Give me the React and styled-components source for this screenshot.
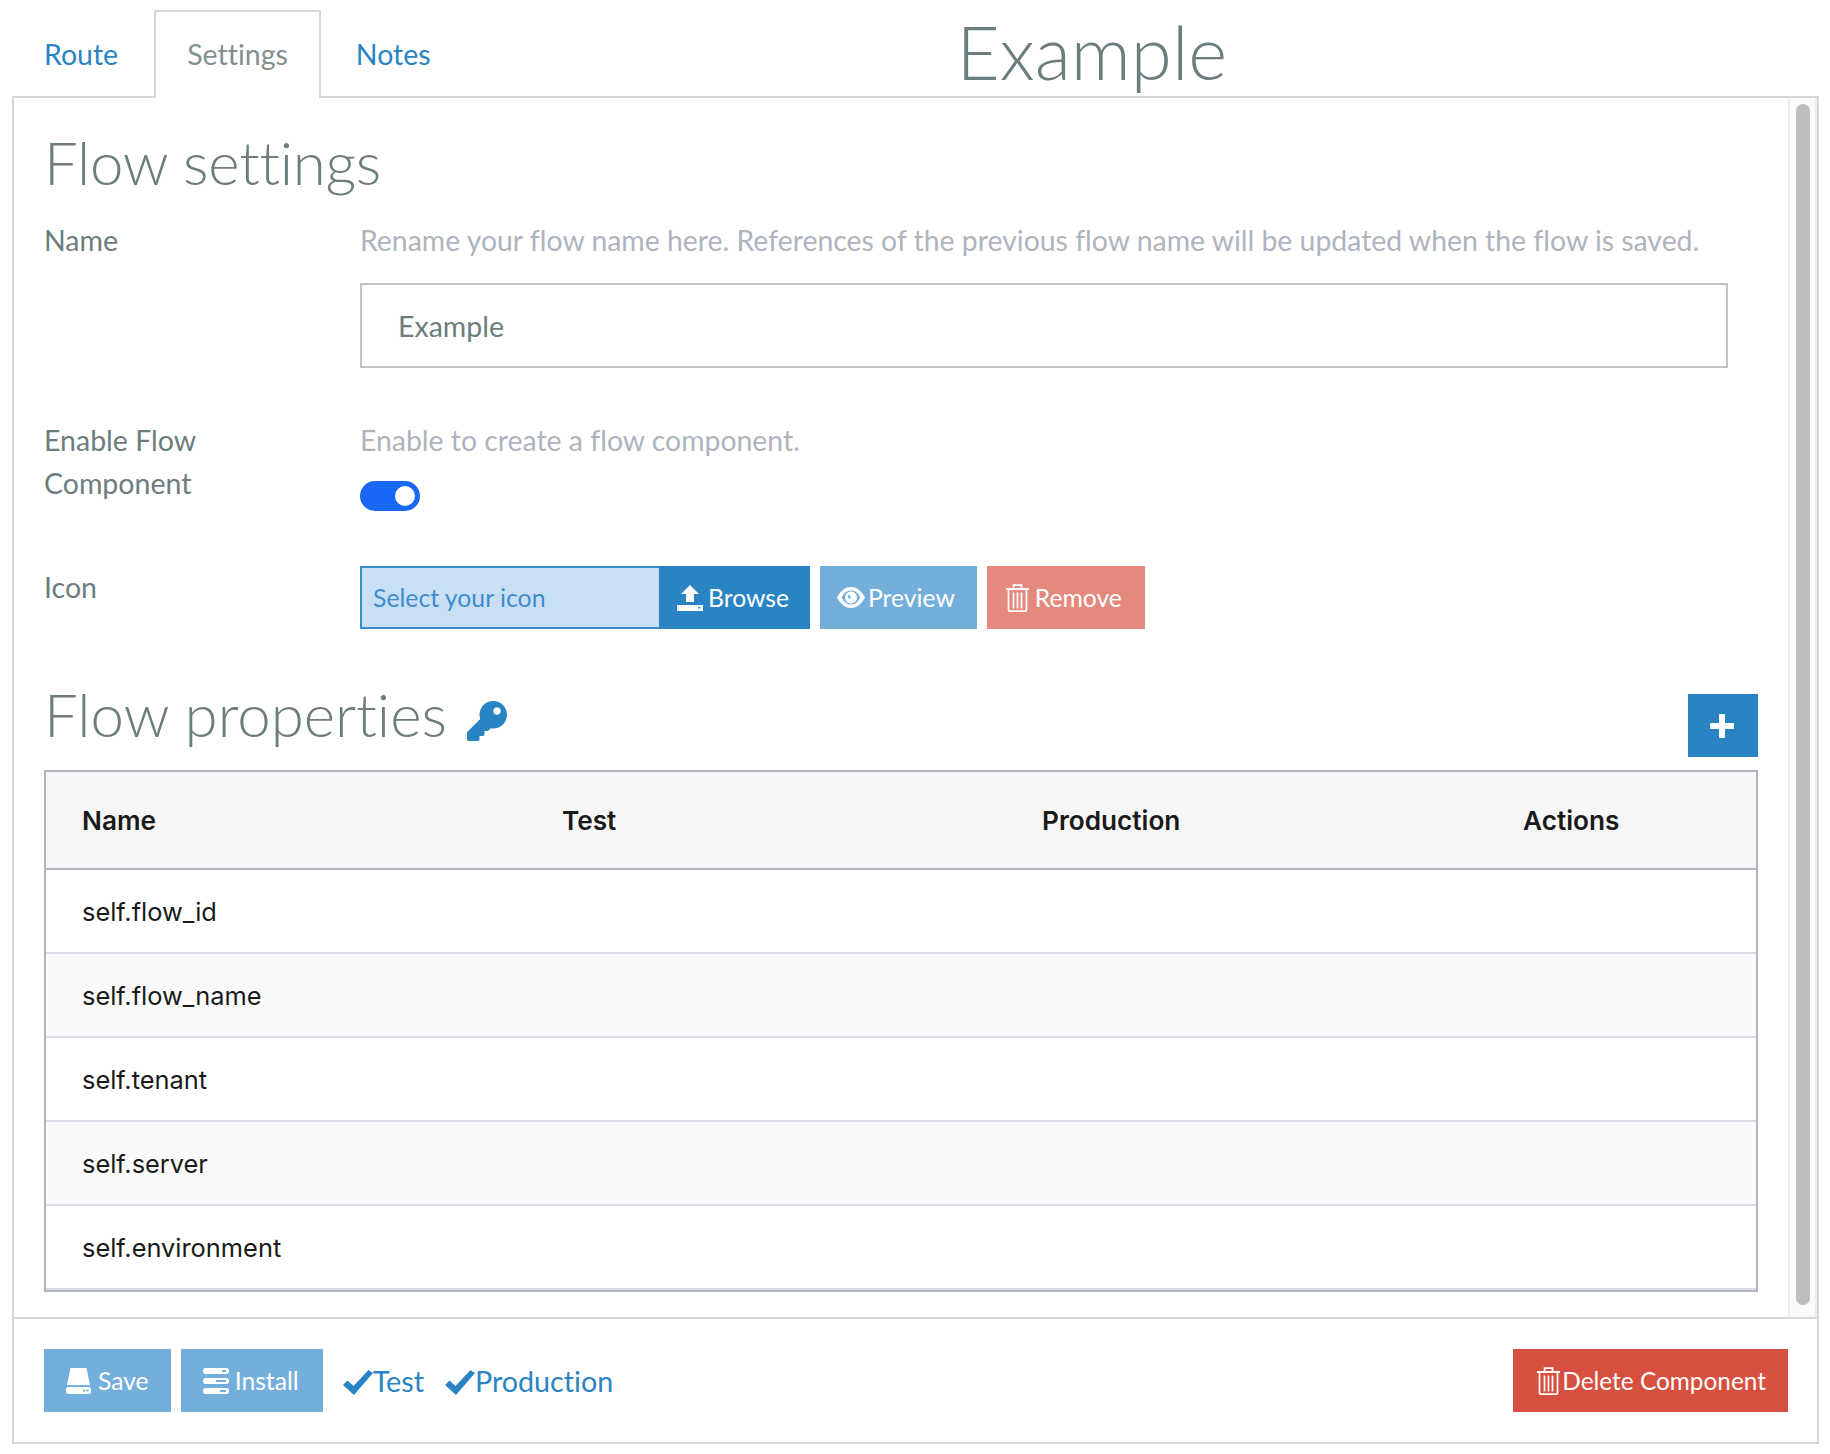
import React from 'react';
import styled, { createGlobalStyle } from 'styled-components';
import { FaKey } from 'react-icons/fa';

const GlobalStyle = createGlobalStyle`
  body {
    margin: 0;
    background: #fff;
    font-family: Lato, "Open Sans", sans-serif;
    font-weight: 300;
    font-variant-ligatures: none;
  }
`;

const Page = styled.div`
  width: 1830px;
  height: 1454px;
  padding: 10px 11px 0 12px;
  box-sizing: border-box;
`;

const TabBar = styled.div`
  display: flex;
  align-items: flex-start;
  height: 86px;
`;

const Tab = styled.a`
  height: 88px;
  margin-right: 2px;
  padding: 0 31px 2px;
  box-sizing: border-box;
  display: flex;
  align-items: center;
  font-size: 28.5px;
  font-weight: 400;
  color: ${p => (p.$active ? '#82908f' : '#2a84c4')};
  background: ${p => (p.$active ? '#fff' : 'transparent')};
  border: 2px solid ${p => (p.$active ? '#d6d6d6' : 'transparent')};
  border-bottom: 0;
  position: relative;
  z-index: 1;
  &:first-child {
    padding: 0 32px 2px 30px;
  }
`;

const FlowTitle = styled.h1`
  margin: -2px 0 0 491px;
  font-size: 74.5px;
  font-weight: 300;
  line-height: 86px;
  height: 86px;
  color: #6c7d7e;
  position: relative;
  z-index: 1;
`;

const Panel = styled.div`
  height: 1348px;
  box-sizing: border-box;
  border: 2px solid #d6d6d6;
  display: flex;
  flex-direction: column;
`;

const Body = styled.div`
  flex: 1;
  display: flex;
  min-height: 0;
`;

const Content = styled.div`
  flex: 1;
  padding: 28px 30px 0 30px;
`;

const Track = styled.div`
  width: 29px;
  box-sizing: border-box;
  padding: 6px 5px 12px 6px;
  background: #fafafa;
  border-left: 2px solid #ececec;
  border-right: 2px solid #ececec;
`;

const Thumb = styled.div`
  height: 100%;
  border-radius: 8px;
  background: #bebebe;
`;

const Heading = styled.h2`
  margin: 0;
  font-size: 60px;
  font-weight: 300;
  line-height: 72px;
  color: #6c7d7e;
  display: flex;
  align-items: center;
  gap: 20px;
`;

const SettingsHeading = styled(Heading)`
  letter-spacing: -0.3px;
`;

const PropertiesHeading = styled(Heading)`
  margin-bottom: 7px;
`;

const KeyIcon = styled(FaKey)`
  width: 40px;
  height: 40px;
  margin-top: 14px;
  color: #2a84c4;
`;

const FormRow = styled.div`
  display: grid;
  grid-template-columns: 316px 1fr;
  margin-top: ${p => p.$top}px;
  padding-right: 30px;
`;

const Label = styled.label`
  font-size: 28.5px;
  font-weight: 400;
  line-height: 43px;
  color: #6c7d7e;
`;

const Hint = styled.div`
  font-size: 28.4px;
  font-weight: 400;
  line-height: 43px;
  color: #aeb4bd;
`;

const NameInput = styled.div`
  margin-top: 21px;
  height: 85px;
  box-sizing: border-box;
  border: 2px solid #c2c2c2;
  padding: 0 36px;
  display: flex;
  align-items: center;
  font-size: 28.5px;
  font-weight: 400;
  color: #6c7d7e;
`;

const Toggle = styled.div`
  margin-top: 19px;
  width: 60px;
  height: 30px;
  border-radius: 15px;
  background: #1a66f5;
  display: flex;
  align-items: center;
  justify-content: flex-end;
  padding-right: 5px;
  box-sizing: border-box;
`;

const Knob = styled.div`
  width: 20px;
  height: 20px;
  border-radius: 50%;
  background: #fff;
`;

const ButtonRow = styled.div`
  display: flex;
  gap: 10px;
`;

const FileGroup = styled.div`
  display: flex;
`;

const FileName = styled.div`
  width: 299px;
  height: 63px;
  box-sizing: border-box;
  background: #c9e0f4;
  border: 2px solid #3a8ccb;
  border-right: 0;
  padding: 0 11px;
  display: flex;
  align-items: center;
  font-size: 24.8px;
  font-weight: 400;
  color: #3d8cce;
`;

const colors = {
  primary: '#2a84c4',
  soft: '#74aeda',
  softDanger: '#e5897c',
  danger: '#d74f3e',
};

const Button = styled.button`
  height: 63px;
  border: 0;
  margin: 0;
  padding: ${p => p.$padding || '0 21px 0 18px'};
  display: inline-flex;
  align-items: center;
  gap: ${p => p.$gap ?? 5}px;
  background: ${p => colors[p.$kind]};
  color: #fff;
  font-family: inherit;
  font-size: ${p => p.$size || 24.7}px;
  font-weight: 400;
  svg {
    flex: none;
  }
`;

const SectionHead = styled.div`
  display: flex;
  justify-content: space-between;
  align-items: flex-end;
  margin: 49px 0 13px;
`;

const AddButton = styled(Button)`
  width: 70px;
  padding: 0 2px 0 0;
  justify-content: center;
`;

const Table = styled.table`
  width: 1714px;
  table-layout: fixed;
  border-collapse: separate;
  border-spacing: 0;
  border: 2px solid #b0b4bf;
  font-family: Inter, sans-serif;
  color: #1a1a1a;
`;

const Th = styled.th`
  height: 96px;
  padding: 0 0 0 36px;
  text-align: left;
  font-size: 26.2px;
  font-weight: 600;
  background: #f6f6f6;
  border-bottom: 2px solid #b0b4bf;
`;

const Td = styled.td`
  height: 82px;
  padding: 0 0 0 36px;
  font-size: 25.4px;
  font-weight: 400;
  background: ${p => (p.$striped ? '#fbfafb' : '#fff')};
  border-bottom: 2px solid #d9dce6;
`;

const Footer = styled.div`
  height: 125px;
  box-sizing: border-box;
  border-top: 2px solid #d6d6d6;
  padding: 30px 29px 0 30px;
  display: flex;
  align-items: flex-start;
`;

const StatusGroup = styled.div`
  display: flex;
  align-self: center;
  gap: 21px;
  margin: -30px 0 0 20px;
`;

const Status = styled.span`
  display: inline-flex;
  align-items: center;
  font-size: 28.7px;
  font-weight: 400;
  color: #2a84c4;
`;

const CheckSvg = styled.svg`
  margin-top: 3px;
`;

const Spacer = styled.div`
  flex: 1;
`;

const CheckIcon = () => (
  <CheckSvg width="30" height="25" viewBox="0 0 30 25" fill="#2a84c4">
    <path d="M0 15 L4.5 10.5 L10.5 16 L25.5 0 L30 3 L11 25 Z" />
  </CheckSvg>
);

const UploadIcon = () => (
  <svg width="26" height="26" viewBox="0 0 26 26" fill="#fff">
    <path d="M13 0 L22 9 H17 V17 H9 V9 H4 Z" />
    <path fillRule="evenodd" d="M0 20 H26 V26 H0 Z M21 22 h2 v1.5 h-2 Z" />
  </svg>
);

const EyeIcon = () => (
  <svg width="28" height="21" viewBox="0 0 28 21" fill="#fff">
    <path
      fillRule="evenodd"
      d="M0 10.5 C4 3 9 0 14 0 C19 0 24 3 28 10.5 C24 18 19 21 14 21 C9 21 4 18 0 10.5 Z M4.5 10.5 C7 15 10 17.5 14 17.5 C18 17.5 21 15 23.5 10.5 C21 6 18 3.5 14 3.5 C10 3.5 7 6 4.5 10.5 Z"
    />
    <path
      fillRule="evenodd"
      d="M14 4.5 a6 6 0 1 0 0.01 0 Z M12.5 7 a3 3 0 0 0 -1.5 3 a1.5 1.5 0 0 0 3 0 a3 3 0 0 1 -1.5 -3 Z"
    />
  </svg>
);

const TrashIcon = () => (
  <svg width="23" height="28" viewBox="0 0 23 28" fill="none" stroke="#fff" strokeWidth="1.7">
    <path d="M0 5 H23" strokeWidth="2" />
    <path d="M7.5 5 V1.2 H15.5 V5" />
    <path d="M2.5 6 V26 Q2.5 27.2 4 27.2 H19 Q20.5 27.2 20.5 26 V6" />
    <path d="M7.5 8.5 V24.5 M11.5 8.5 V24.5 M15.5 8.5 V24.5" />
  </svg>
);

const DriveIcon = () => (
  <svg width="25" height="26" viewBox="0 0 25 26" fill="#fff">
    <path d="M4.5 0 H20.5 L24 17 H1 Z" />
    <path
      fillRule="evenodd"
      d="M2.5 19 H22.5 Q25 19 25 21.5 V23.5 Q25 26 22.5 26 H2.5 Q0 26 0 23.5 V21.5 Q0 19 2.5 19 Z M17 21.5 h2 v2 h-2 Z M20.5 21.5 h2 v2 h-2 Z"
    />
  </svg>
);

const ServerIcon = () => (
  <svg width="26" height="26" viewBox="0 0 26 26" fill="#fff">
    <path fillRule="evenodd" d="M2.5 0 H23.5 Q26 0 26 3 Q26 6 23.5 6 H2.5 Q0 6 0 3 Q0 0 2.5 0 Z M19 2 h4 v2 h-4 Z" />
    <path fillRule="evenodd" d="M2.5 10 H23.5 Q26 10 26 13 Q26 16 23.5 16 H2.5 Q0 16 0 13 Q0 10 2.5 10 Z M13 12 h10 v2 h-10 Z" />
    <path fillRule="evenodd" d="M2.5 20 H23.5 Q26 20 26 23 Q26 26 23.5 26 H2.5 Q0 26 0 23 Q0 20 2.5 20 Z M17 22 h6 v2 h-6 Z" />
  </svg>
);

const PlusIcon = () => (
  <svg width="24" height="24" viewBox="0 0 24 24" fill="#fff">
    <path d="M9 1 Q9 0 10 0 H14 Q15 0 15 1 V9 H23 Q24 9 24 10 V14 Q24 15 23 15 H15 V23 Q15 24 14 24 H10 Q9 24 9 23 V15 H1 Q0 15 0 14 V10 Q0 9 1 9 H9 Z" />
  </svg>
);

const properties = [
  'self.flow_id',
  'self.flow_name',
  'self.tenant',
  'self.server',
  'self.environment',
];

export default function App() {
  return (
    <Page>
      <GlobalStyle />
      <TabBar>
        <Tab>Route</Tab>
        <Tab $active>Settings</Tab>
        <Tab>Notes</Tab>
        <FlowTitle>Example</FlowTitle>
      </TabBar>
      <Panel>
        <Body>
          <Content>
            <SettingsHeading>Flow settings</SettingsHeading>
            <FormRow $top={21}>
              <Label>Name</Label>
              <div>
                <Hint>Rename your flow name here. References of the previous flow name will be updated when the flow is saved.</Hint>
                <NameInput>Example</NameInput>
              </div>
            </FormRow>
            <FormRow $top={51}>
              <Label>Enable Flow<br />Component</Label>
              <div>
                <Hint>Enable to create a flow component.</Hint>
                <Toggle><Knob /></Toggle>
              </div>
            </FormRow>
            <FormRow $top={55}>
              <Label>Icon</Label>
              <ButtonRow>
                <FileGroup>
                  <FileName>Select your icon</FileName>
                  <Button $kind="primary"><UploadIcon />Browse</Button>
                </FileGroup>
                <Button $kind="soft" $padding="0 22px 0 17px" $gap={3}><EyeIcon />Preview</Button>
                <Button $kind="softDanger" $padding="0 23px 0 19px" $gap={6}><TrashIcon />Remove</Button>
              </ButtonRow>
            </FormRow>
            <SectionHead>
              <PropertiesHeading>Flow properties <KeyIcon /></PropertiesHeading>
              <AddButton $kind="primary"><PlusIcon /></AddButton>
            </SectionHead>
            <Table>
              <colgroup>
                <col width="480" />
                <col width="480" />
                <col width="481" />
                <col />
              </colgroup>
              <thead>
                <tr>
                  <Th>Name</Th>
                  <Th>Test</Th>
                  <Th>Production</Th>
                  <Th>Actions</Th>
                </tr>
              </thead>
              <tbody>
                {properties.map((name, i) => (
                  <tr key={name}>
                    <Td $striped={i % 2 === 1}>{name}</Td>
                    <Td $striped={i % 2 === 1} />
                    <Td $striped={i % 2 === 1} />
                    <Td $striped={i % 2 === 1} />
                  </tr>
                ))}
              </tbody>
            </Table>
          </Content>
          <Track><Thumb /></Track>
        </Body>
        <Footer>
          <ButtonRow>
            <Button $kind="soft" $padding="0 22px 0 22px" $gap={7}><DriveIcon />Save</Button>
            <Button $kind="soft" $padding="0 24px 0 22px" $gap={6}><ServerIcon />Install</Button>
          </ButtonRow>
          <StatusGroup>
            <Status><CheckIcon />Test</Status>
            <Status><CheckIcon />Production</Status>
          </StatusGroup>
          <Spacer />
          <Button $kind="danger" $padding="0 22px 0 24px" $gap={2} $size={24.4}><TrashIcon />Delete Component</Button>
        </Footer>
      </Panel>
    </Page>
  );
}
